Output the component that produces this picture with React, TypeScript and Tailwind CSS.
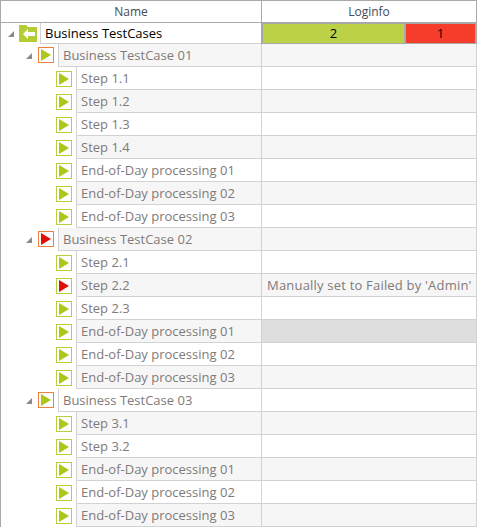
const SANS = "font-['Open_Sans','Noto_Sans',sans-serif]";

type Status = 'pass' | 'fail';

type Row = {
  name: string;
  level: 1 | 2;
  status: Status;
  shaded?: boolean;
  log?: string;
  dark?: boolean;
};

const rows: Row[] = [
  { name: 'Business TestCase 01', level: 1, status: 'pass', shaded: true },
  { name: 'Step 1.1', level: 2, status: 'pass' },
  { name: 'Step 1.2', level: 2, status: 'pass', shaded: true },
  { name: 'Step 1.3', level: 2, status: 'pass' },
  { name: 'Step 1.4', level: 2, status: 'pass', shaded: true },
  { name: 'End-of-Day processing 01', level: 2, status: 'pass' },
  { name: 'End-of-Day processing 02', level: 2, status: 'pass', shaded: true },
  { name: 'End-of-Day processing 03', level: 2, status: 'pass' },
  { name: 'Business TestCase 02', level: 1, status: 'fail', shaded: true },
  { name: 'Step 2.1', level: 2, status: 'pass' },
  { name: 'Step 2.2', level: 2, status: 'fail', shaded: true, log: "Manually set to Failed by 'Admin'" },
  { name: 'Step 2.3', level: 2, status: 'pass' },
  { name: 'End-of-Day processing 01', level: 2, status: 'pass', shaded: true, dark: true },
  { name: 'End-of-Day processing 02', level: 2, status: 'pass' },
  { name: 'End-of-Day processing 03', level: 2, status: 'pass', shaded: true },
  { name: 'Business TestCase 03', level: 1, status: 'pass' },
  { name: 'Step 3.1', level: 2, status: 'pass', shaded: true },
  { name: 'Step 3.2', level: 2, status: 'pass' },
  { name: 'End-of-Day processing 01', level: 2, status: 'pass', shaded: true },
  { name: 'End-of-Day processing 02', level: 2, status: 'pass' },
  { name: 'End-of-Day processing 03', level: 2, status: 'pass', shaded: true },
];

function Expander() {
  return (
    <svg width="6" height="6" viewBox="0 0 6 6" className="shrink-0">
      <path d="M6 0V6H0Z" fill="#8a8a8a" />
    </svg>
  );
}

function StatusIcon({ status, level }: { status: Status; level: 1 | 2 }) {
  const border = level === 1 ? 'border-[#f0813c]' : 'border-[#b5cf3e]';
  const fill = status === 'fail' ? '#e01008' : '#aec61c';
  return (
    <div className={`w-4 h-4 border ${border} flex items-center justify-center shrink-0 bg-white`}>
      <svg width="12" height="14" viewBox="0 0 12 14">
        <path d="M1 1L11 7L1 13Z" fill={fill} />
      </svg>
    </div>
  );
}

function RootIcon() {
  return (
    <svg width="18" height="17" viewBox="0 0 18 17" className="shrink-0">
      <path d="M0 0H7L9 2H18V17H0Z" fill="#b5cc35" />
      <path d="M4 9L9 4V7H16V11H9V14Z" fill="#fff" />
    </svg>
  );
}

function TreeRow({ row }: { row: Row }) {
  const bg = row.shaded ? 'bg-[#f6f6f6]' : 'bg-white';
  return (
    <div className="flex h-[23px]">
      {row.level === 1 ? (
        <div className="flex items-start shrink-0 h-full w-[57px] pl-[25px] pt-[3px]">
          <div className="mr-[6px] mt-[6px]"><Expander /></div>
          <StatusIcon status={row.status} level={row.level} />
        </div>
      ) : (
        <div className="flex items-start shrink-0 h-full w-[75px] pl-[55px] pt-[4px]">
          <StatusIcon status={row.status} level={row.level} />
        </div>
      )}
      <div className={`flex-1 min-w-0 flex items-center h-full pl-[4px] pt-px border-l border-b border-[#d2d2d2] ${bg} text-[13px] text-[#807a79] whitespace-nowrap`}>
        {row.name}
      </div>
      <div className={`w-[216px] shrink-0 h-full flex items-center pl-[5px] pt-px border-x border-b border-[#d2d2d2] text-[13px] tracking-[0.2px] text-[#807a79] whitespace-nowrap ${row.dark ? 'bg-[#dedede]' : bg}`}>
        {row.log}
      </div>
    </div>
  );
}

export default function App() {
  return (
    <div className={`w-[477px] h-[527px] overflow-hidden bg-white border-l border-t border-[#a9a9a9] ${SANS}`}>
      <div className="flex h-[22px] border-b border-[#a9a9a9] text-[12px] text-[#444b55]">
        <div className="flex-1 flex items-center justify-center">Name</div>
        <div className="w-[216px] shrink-0 flex items-center justify-center border-x border-[#a9a9a9]">Loginfo</div>
      </div>
      <div className="flex h-[21px]">
        <div className="w-[39px] shrink-0 flex items-center pl-[7px]">
          <div className="mr-[5px]"><Expander /></div>
          <RootIcon />
        </div>
        <div className="flex-1 min-w-0 flex items-center pl-[4px] pt-px border-l border-b border-[#d2d2d2] text-[13px] text-black">
          Business TestCases
        </div>
        <div className="w-[216px] shrink-0 border-l border-[#a9a9a9]">
          <div className="flex h-full bg-[#a9a9a9] pl-px py-px pr-[2px] gap-[2px] text-[13px] text-black">
            <div className="w-[141px] flex items-center justify-center bg-[#bdd147]">2</div>
            <div className="flex-1 flex items-center justify-center bg-[#f63d2c]">1</div>
          </div>
        </div>
      </div>
      {rows.map((row, i) => (
        <TreeRow key={i} row={row} />
      ))}
    </div>
  );
}
